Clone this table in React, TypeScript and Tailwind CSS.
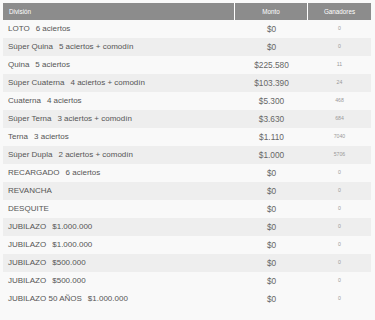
import React from "react";

type Row = { name: string; detail?: string; monto: string; gan: string };

const rows: Row[] = [
  { name: "LOTO", detail: "6 aciertos", monto: "$0", gan: "0" },
  { name: "Súper Quina", detail: "5 aciertos + comodín", monto: "$0", gan: "0" },
  { name: "Quina", detail: "5 aciertos", monto: "$225.580", gan: "11" },
  { name: "Súper Cuaterna", detail: "4 aciertos + comodín", monto: "$103.390", gan: "24" },
  { name: "Cuaterna", detail: "4 aciertos", monto: "$5.300", gan: "468" },
  { name: "Súper Terna", detail: "3 aciertos + comodín", monto: "$3.630", gan: "684" },
  { name: "Terna", detail: "3 aciertos", monto: "$1.110", gan: "7040" },
  { name: "Súper Dupla", detail: "2 aciertos + comodín", monto: "$1.000", gan: "5706" },
  { name: "RECARGADO", detail: "6 aciertos", monto: "$0", gan: "0" },
  { name: "REVANCHA", monto: "$0", gan: "0" },
  { name: "DESQUITE", monto: "$0", gan: "0" },
  { name: "JUBILAZO", detail: "$1.000.000", monto: "$0", gan: "0" },
  { name: "JUBILAZO", detail: "$1.000.000", monto: "$0", gan: "0" },
  { name: "JUBILAZO", detail: "$500.000", monto: "$0", gan: "0" },
  { name: "JUBILAZO", detail: "$500.000", monto: "$0", gan: "0" },
  { name: "JUBILAZO 50 AÑOS", detail: "$1.000.000", monto: "$0", gan: "0" },
];

export default function App() {
  return (
    <div
      className="w-[375px] h-[320px] bg-[#f9f9f9] p-[3px] overflow-hidden"
      style={{ fontFamily: '"Liberation Sans", Arial, sans-serif' }}
    >
      <div className="w-[368px]">
        <div className="grid grid-cols-[232px_73px_63px] h-[17px] bg-[#8c8c8c] text-white text-[6.3px] leading-[17px]">
          <div className="pl-[6px] border-r border-white">División</div>
          <div className="text-center border-r border-white">Monto</div>
          <div className="text-center">Ganadores</div>
        </div>
        {rows.map((r, i) => (
          <div
            key={i}
            className={
              "grid grid-cols-[232px_73px_63px] h-[18px] items-center " +
              (i % 2 === 1 && i !== 15 ? "bg-[#eeeeee]" : "bg-[#f9f9f9]")
            }
          >
            <div className="pl-[5px] text-[8px] text-[#555555] whitespace-nowrap">
              {r.name}
              {r.detail && <span className="ml-[6px]">{r.detail}</span>}
            </div>
            <div className="text-center text-[8.3px] text-[#666666]">{r.monto}</div>
            <div className="text-center text-[5.2px] text-[#999999]">{r.gan}</div>
          </div>
        ))}
      </div>
    </div>
  );
}
